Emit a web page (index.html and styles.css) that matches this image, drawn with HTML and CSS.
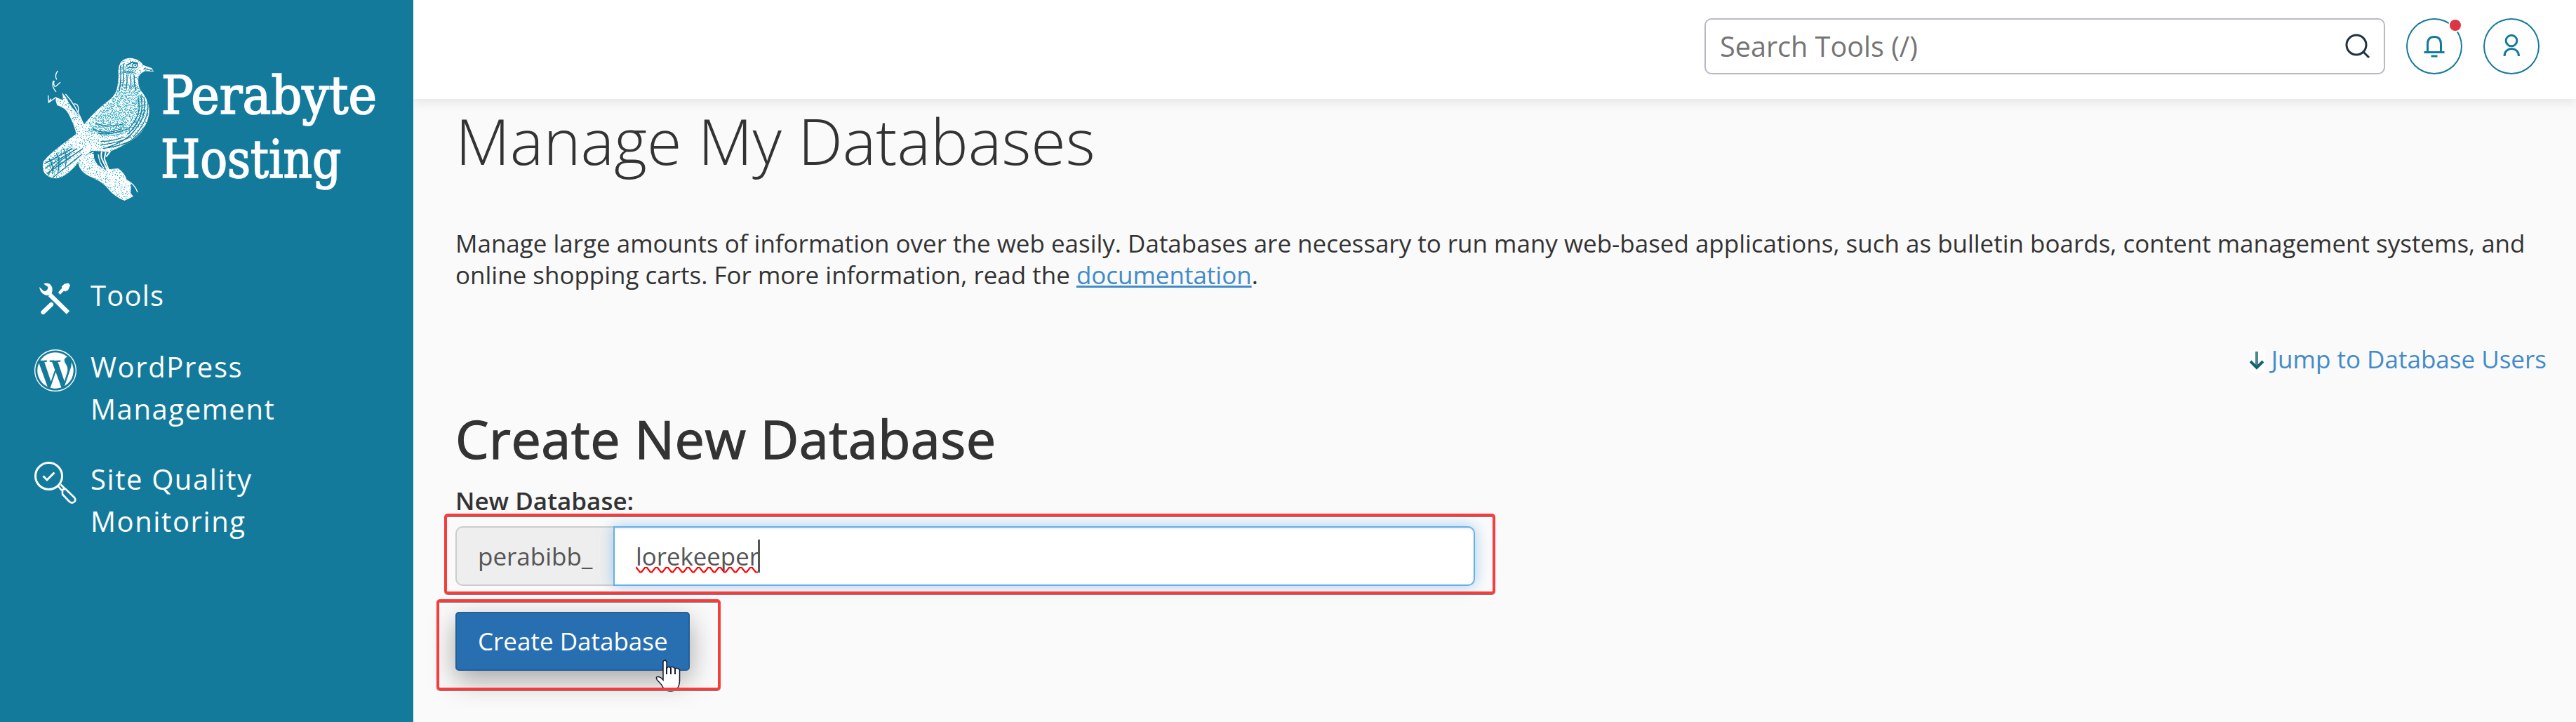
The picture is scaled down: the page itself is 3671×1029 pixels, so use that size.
FILE: index.html
```html
<!DOCTYPE html>
<html lang="en">
<head>
<meta charset="utf-8">
<title>Manage My Databases</title>
<link rel="stylesheet" href="styles.css">
</head>
<body>
<div class="app">
  <aside class="sidebar">
    <svg class="logo" viewBox="0 0 1560 750" role="img" aria-label="Perabyte Hosting">
      <defs>
        <filter id="etch" x="0" y="0" width="100%" height="100%">
          <feTurbulence type="fractalNoise" baseFrequency="0.16 0.22" numOctaves="2" seed="7" result="n"/>
          <feColorMatrix in="n" type="matrix" values="0 0 0 0 0.078  0 0 0 0 0.475  0 0 0 0 0.608  14 0 0 0 -7.1"/>
          <feComposite in2="SourceGraphic" operator="in"/>
        </filter>
        <filter id="etch-light" x="0" y="0" width="100%" height="100%">
          <feTurbulence type="fractalNoise" baseFrequency="0.2 0.2" numOctaves="2" seed="3" result="n"/>
          <feColorMatrix in="n" type="matrix" values="0 0 0 0 0.078  0 0 0 0 0.475  0 0 0 0 0.608  14 0 0 0 -8.3"/>
          <feComposite in2="SourceGraphic" operator="in"/>
        </filter>
        <clipPath id="body"><path id="bird" d="M400 82Q418 66 445 69Q478 74 492 98L530 112L537 126L500 124Q478 134 472 150Q468 180 480 205Q512 240 518 285Q520 335 488 380Q450 430 345 470Q315 466 272 464Q240 486 215 515Q160 580 120 583Q88 582 70 560Q58 538 66 510Q90 478 180 412Q215 390 245 345Q290 290 350 245Q378 222 382 190Q388 150 386 120Q388 95 400 82Z"/></clipPath>
      </defs>
      <g fill="#fff">
        <path d="M120 236L150 248L146 216L165 240Q178 272 205 298Q232 335 240 352L226 392L206 392Q196 350 172 305Q158 280 124 270L118 250Z"/>
        <path d="M222 505L262 475L282 480Q278 520 330 545L385 540Q415 560 422 590L440 605L434 640L450 660L412 678Q372 664 342 628Q322 598 262 574Q222 555 215 520Z"/>
        <use href="#bird"/>
      </g>
      <path filter="url(#etch-light)" d="M120 236L150 248L146 216L165 240Q178 272 205 298Q232 335 240 352L226 392L206 392Q196 350 172 305Q158 280 124 270L118 250ZM222 505L262 475L282 480Q278 520 330 545L385 540Q415 560 422 590L440 605L434 640L450 660L412 678Q372 664 342 628Q322 598 262 574Q222 555 215 520Z"/>
      <use href="#bird" filter="url(#etch-light)"/>
      <path filter="url(#etch)" d="M390 180L465 180Q505 240 505 290Q495 350 440 380Q390 410 300 400L255 380Q265 330 320 285Q375 240 390 180ZM395 95L470 90L460 140L392 140Z"/>
      <path filter="url(#etch)" d="M270 350Q310 310 360 320L430 330Q430 375 370 395Q310 410 270 380ZM75 510L190 430L180 500L110 560Z"/>
      <g clip-path="url(#body)" fill="none" stroke="#14799b" stroke-width="4">
        <path d="M395 100Q400 150 390 210M408 92Q412 150 404 190M422 140Q426 170 418 200M438 142Q440 170 440 200M454 142Q452 180 462 205"/>
        <path d="M508 240Q530 320 450 405M495 235Q516 320 435 400Q400 430 340 450M482 230Q505 320 425 395M470 240Q490 310 430 370M525 320Q470 430 330 478M465 410Q400 446 320 455M440 405Q390 430 310 440M410 405Q370 424 310 425"/>
        <path d="M70 520L190 455M72 540L210 455M80 562L235 455M105 580L230 480M90 500Q110 520 105 565M120 475Q140 500 128 555M150 455Q170 480 160 530M85 570Q110 520 180 480"/>
        <path d="M420 100L445 86L470 90M425 112Q440 104 446 112M410 128L450 128" stroke-width="5"/>
        <path d="M275 370Q330 400 400 370M285 345Q340 370 410 350M300 390Q350 400 430 370"/>
      </g>
      <circle cx="457" cy="100" r="10" fill="#fff" stroke="#14799b" stroke-width="4"/>
      <circle cx="458" cy="99" r="4" fill="#14799b"/>
      <path d="M495 112L532 122" stroke="#14799b" stroke-width="4" fill="none"/>
      <g fill="none" stroke="#fff" stroke-width="4">
        <path d="M127 123Q112 142 122 160M108 165Q98 190 120 212M118 190L138 172M116 192Q106 180 112 165M86 228L88 258L120 236M88 258L98 242M196 264Q220 262 214 302M160 222Q205 270 238 355"/>
        <path d="M315 468Q310 490 316 500L340 550M332 470L326 498L350 560L370 600M352 466L334 490" stroke-width="6"/>
        <path d="M420 590Q455 605 468 642M438 615L436 652M410 570L420 600M235 495L280 470M300 480Q305 520 325 540"/>
      </g>
      <g class="logo-text">
        <text x="569" y="307" textLength="922" lengthAdjust="spacingAndGlyphs">Perabyte</text>
        <text x="567" y="580" textLength="772" lengthAdjust="spacingAndGlyphs">Hosting</text>
      </g>
    </svg>
    <nav class="nav">
      <a class="nav-item">
        <svg class="nav-icon" viewBox="0 0 60 60"><g fill="none" stroke="#fff" stroke-linecap="butt"><path d="M22 25L48 50.500" stroke-width="6.200"/><path d="M12.500 50L24 39" stroke-width="6.200" stroke-linecap="round"/></g><path fill="#fff" d="M13 9.500Q22 6 25.500 15Q26 20 24.500 23.500Q20 28 13.500 24.500Q7.500 21 7.200 14L13.500 20Q19 20 19.500 14ZM34 21.500L39 16L39 13L43 9.500L48.500 8.500L51 11.500L48 18.500L44 20.500L42 19.500L36.500 25Z"/></svg>
        <span>Tools</span>
      </a>
      <a class="nav-item">
        <svg class="nav-icon" viewBox="0 0 16 16" fill="#fff"><path d="M12.633 7.653c0-.848-.305-1.435-.566-1.892l-.08-.13c-.317-.51-.594-.958-.594-1.48 0-.63.478-1.218 1.152-1.218q.03 0 .058.003l.031.003A6.84 6.84 0 0 0 8 1.137 6.86 6.86 0 0 0 2.266 4.230c.16.005.313.009.442.009.717 0 1.828-.087 1.828-.087.37-.022.414.521.044.565 0 0-.371.044-.785.065l2.5 7.434 1.5-4.506-1.070-2.929c-.369-.022-.719-.065-.719-.065-.37-.022-.326-.588.043-.566 0 0 1.134.087 1.808.087.718 0 1.830-.087 1.830-.087.37-.022.413.522.043.566 0 0-.372.043-.785.065l2.480 7.377.684-2.287.054-.173c.27-.86.469-1.495.469-2.046zM1.137 8a6.86 6.86 0 0 0 3.868 6.176L1.730 5.206A6.8 6.8 0 0 0 1.137 8"/><path d="M6.061 14.583 8.121 8.600l2.109 5.780q.02.05.049.094a6.85 6.85 0 0 1-4.218.109m7.960-9.876q.046.328.047.706c0 .696-.13 1.479-.522 2.458l-2.096 6.060a6.86 6.86 0 0 0 2.572-9.224z"/><path fill-rule="evenodd" d="M0 8c0-4.411 3.589-8 8-8s8 3.589 8 8-3.590 8-8 8-8-3.589-8-8m.367 0c0 4.209 3.424 7.633 7.633 7.633S15.632 12.209 15.632 8C15.632 3.790 12.208.367 8 .367 3.790.367.367 3.790.367 8"/></svg>
        <span>WordPress<br>Management</span>
      </a>
      <a class="nav-item">
        <svg class="nav-icon" viewBox="0 0 60 60" fill="none" stroke="#fff"><circle cx="20.500" cy="20.500" r="19" stroke-width="3"/><path d="M12.500 20.500L18 26L28.500 15.500" stroke-width="3"/><path d="M34 35L39 41M37.500 32.500L43 38M40 40L44 38.500L57 51Q60 55 56.500 57.500Q53 60 49.500 56.500L40 46.500Z" stroke-width="2.600" stroke-linejoin="round"/></svg>
        <span>Site Quality<br>Monitoring</span>
      </a>
    </nav>
  </aside>

  <div class="page">
    <header class="topbar">
      <div class="search">
        <span>Search Tools (/)</span>
        <svg class="search-icon" viewBox="0 0 36 36" fill="none" stroke="#20333f" stroke-width="3"><circle cx="16" cy="16" r="14"/><path d="M25.500 25.500L34 34"/></svg>
      </div>
      <div class="round">
        <svg viewBox="0 0 80 80" fill="none" stroke="#147a9c" stroke-width="3"><path d="M30.500 48V37Q30.500 26.500 40 26.500T49.500 37V48M25.500 48.500H54.500M35.500 54H44.500"/></svg>
        <i class="badge"></i>
      </div>
      <div class="round">
        <svg viewBox="0 0 80 80" fill="none" stroke="#147a9c" stroke-width="3"><circle cx="40" cy="32" r="7.800"/><path d="M30 54C30 40 50.500 40 50.500 54"/></svg>
      </div>
    </header>

    <main class="content">
      <h1>Manage My Databases</h1>
      <p class="intro">Manage large amounts of information over the web easily. Databases are necessary to run many web-based applications, such as bulletin boards, content management systems, and<br>online shopping carts. For more information, read the <a class="doc">documentation</a>.</p>
      <a class="jump">
        <svg viewBox="0 0 22 32"><rect width="22" height="32" fill="#fff"/><g fill="none" stroke-width="4"><path d="M10 2V24" stroke="#4d8791"/><path d="M1 16L10 25L19 16" stroke="#13606f"/></g></svg>
        <span>Jump to Database Users</span>
      </a>
      <h2>Create New Database</h2>
      <label class="label">New Database:</label>
      <div class="group">
        <span class="prefix">perabibb_</span>
        <div class="input">
          <span class="value">lorekeeper<svg class="spell" viewBox="0 0 174 10" fill="none" stroke="#f00" stroke-width="2.200"><path d="M0 1L6 8.500L8 8.500L13 2L16 2L21 8.500L23 8.500L28 2L31 2L36 8.500L38 8.500L43 2L46 2L51 8.500L53 8.500L58 2L61 2L66 8.500L68 8.500L73 2L76 2L81 8.500L83 8.500L88 2L91 2L96 8.500L98 8.500L103 2L106 2L111 8.500L113 8.500L118 2L121 2L126 8.500L128 8.500L133 2L136 2L141 8.500L143 8.500L148 2L151 2L156 8.500L158 8.500L163 2L166 2L171 8.500L174 8.500"/></svg></span><i class="caret"></i>
        </div>
        <i class="mark mark-field"></i>
      </div>
      <div class="button">Create Database
        <svg class="cursor" viewBox="0 0 36 48"><path d="M11 4Q13.500 0 16 4V14Q18 10 21 12.500Q25 10 28 14Q32 12 34.500 16V32Q34 40 29.500 44Q22 48 13 44Q9 36 2.500 30Q0 26 3 25.500Q7 25 11 30Z" fill="#fff" stroke="#1a1a2e" stroke-width="1.500"/><path d="M16 12V22M22 13V22M28 14V22" stroke="#1a1a2e" stroke-width="2" fill="none"/></svg>
        <i class="mark mark-button"></i>
      </div>
    </main>
  </div>
</div>
</body>
</html>
```
FILE: styles.css
```css
* { box-sizing: border-box; }
body {
  margin: 0;
  background: #fafafa;
  color: #333;
  font: 35px/45px "Open Sans", "Noto Sans", sans-serif;
}
.app { display: flex; height: 1029px; overflow: hidden; }
.sidebar {
  width: 589px;
  flex: none;
  padding-top: 60px;
  background: #147a9c;
  color: #fff;
  position: relative;
  z-index: 2;
}
.logo { display: block; width: 520px; height: 250px; margin-left: 40px; }
.logo-text {
  fill: #fff;
  stroke: #fff;
  stroke-width: 5px;
  font: 224px "DejaVu Serif Condensed", "DejaVu Serif", serif;
}
.nav { margin-top: 61px; }
.nav-item {
  display: flex;
  align-items: flex-start;
  gap: 20px;
  padding: 20px 0 20px 49px;
  font-size: 40px;
  line-height: 60px;
  letter-spacing: 1.600px;
}
.nav-item:first-child { padding-bottom: 18px; letter-spacing: 1.200px; }
.nav-icon { width: 60px; height: 60px; margin-top: 5px; flex: none; }
.nav-item:first-child .nav-icon { margin-top: 4px; }

.page { flex: 1; min-width: 0; }
.topbar {
  display: flex;
  justify-content: flex-end;
  gap: 30px;
  height: 141px;
  padding: 26px 52px 0 0;
  background: #fff;
  box-shadow: 0 5px 15px rgba(0, 0, 0, .09);
}
.search {
  display: flex;
  align-items: center;
  justify-content: space-between;
  width: 970px;
  height: 80px;
  padding: 0 20px 0 20px;
  border: 2px solid #b8b8ca;
  border-radius: 10px;
  font-size: 39.600px;
  color: #757575;
}
.search-icon { width: 36px; height: 36px; margin-right: -1px; }
.round {
  position: relative;
  width: 80px;
  height: 80px;
  border-radius: 50%;
  box-shadow: inset 0 0 0 2px #147a9c;
}
.round svg { display: block; width: 80px; height: 80px; }
.badge {
  position: absolute;
  left: 60px;
  top: 0;
  width: 20px;
  height: 20px;
  border: 2px solid #fff;
  border-radius: 50%;
  background: #dc3545;
}

.content { padding: 9px 42px 0 60px; }
h1 { margin: 0; font-weight: 300; font-size: 90px; line-height: 100px; }
.intro { margin: 74px 0 75px; font-size: 34.970px; white-space: nowrap; }
.doc { color: #428bca; text-decoration: underline; }
.jump { display: flex; justify-content: flex-end; gap: 9px; color: #428bca; }
.jump svg { width: 22px; height: 32px; margin-top: 10px; }
h2 {
  margin: 49px 0 24px;
  font-weight: 400;
  font-size: 75.500px;
  line-height: 84px;
  letter-spacing: .5px;
  -webkit-text-stroke: 1.300px #333;
}
.label { display: block; margin-bottom: 14px; font-weight: 600; }
.group {
  position: relative;
  display: flex;
  width: 1453px;
  height: 85px;
  color: #555;
}
.prefix {
  width: 225px;
  padding: 18px 0 0 30px;
  border: 2px solid #ccc;
  border-right: 0;
  border-radius: 10px 0 0 10px;
  background: #eee;
}
.input {
  display: flex;
  flex: 1;
  padding: 18px 30px 0;
  border: 2px solid #66afe9;
  border-radius: 0 10px 10px 0;
  background: #fff;
  box-shadow: inset 0 2px 3px rgba(0, 0, 0, .075), 0 0 20px rgba(102, 175, 233, .6);
}
.value { position: relative; font-size: 34.800px; }
.spell { position: absolute; left: 0; top: 37px; width: 174px; height: 10px; }
.caret { width: 3px; height: 47px; margin: -1px 0 0 -2px; background: #555; }
.button {
  position: relative;
  width: 334px;
  height: 84px;
  margin-top: 37px;
  padding: 17px 0 0 30px;
  border: 2px solid #255f96;
  border-radius: 5px;
  background: #286fb1;
  color: #fff;
  box-shadow: 0 13px 38px rgba(0, 0, 0, .35);
  white-space: nowrap;
}
.mark {
  position: absolute;
  border: 4px solid #f63c3c;
  border-radius: 5px;
  box-shadow: 0 1px 0 #84807f, inset 0 1px 0 #84807f;
}
.mark-field { left: -16px; top: -18px; width: 1498px; height: 115px; }
.mark-button { left: -29px; top: -20px; width: 405px; height: 130px; }
.cursor { position: absolute; left: 283px; top: 65px; width: 36px; height: 48px; }
```
